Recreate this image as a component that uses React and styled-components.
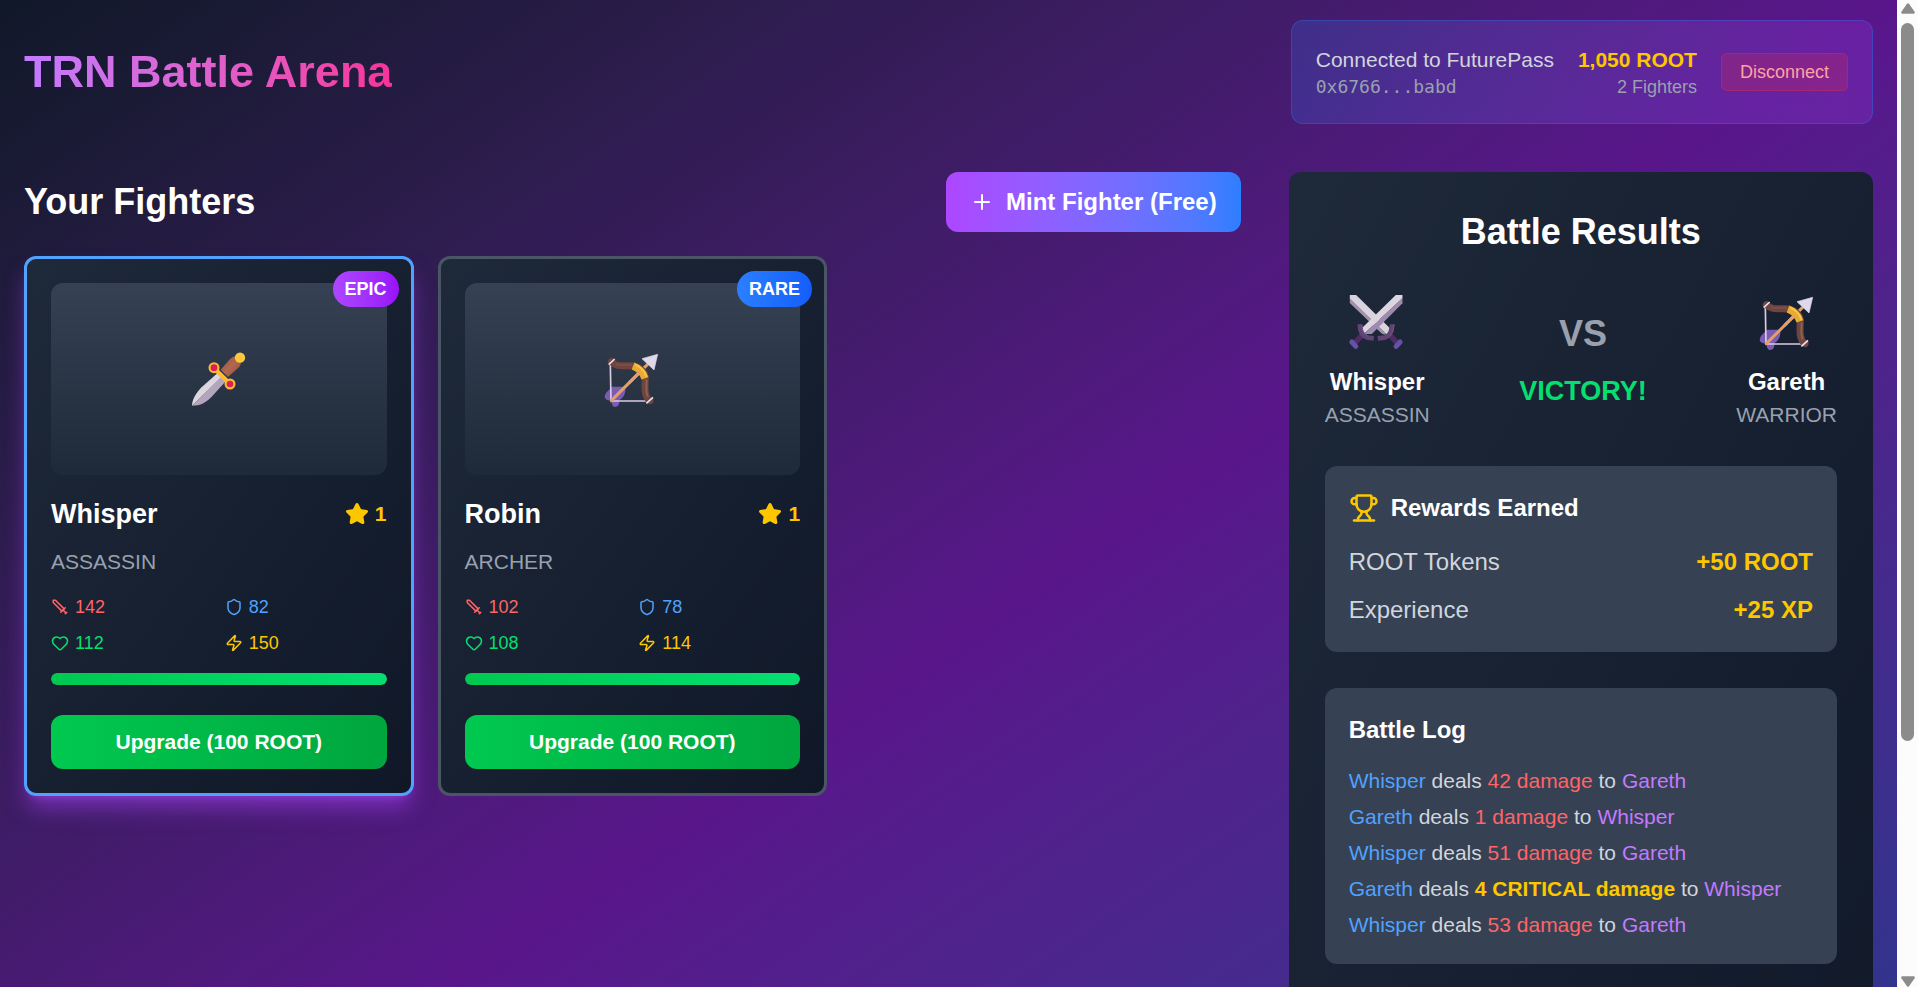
import React from "react";
import styled, { createGlobalStyle, css } from "styled-components";
import { Heart, Plus, Shield, Star, Trophy, Zap } from "lucide-react";

const colors = {
  gray300: "#d1d5dc",
  gray400: "#99a1af",
  gray600: "#4a5565",
  gray700: "#364153",
  gray800: "#1e2939",
  gray900: "#101828",
  red: "#ff6467",
  blue: "#51a2ff",
  green: "#05df72",
  yellow: "#fdc700",
  purple: "#c27aff",
};

const GlobalStyle = createGlobalStyle`
  *, *::before, *::after { box-sizing: border-box; }
  html, body { margin: 0; height: 100%; overflow: hidden; }
  body {
    font-family: "Liberation Sans", Arial, sans-serif;
    font-size: 24px;
    line-height: 36px;
    color: #fff;
  }
  h1, h2, h3, h4, p { margin: 0; }
  button { font-family: inherit; color: inherit; cursor: pointer; }
  svg { display: block; flex-shrink: 0; }
`;

const Window = styled.div`
  display: flex;
  height: 987px;
  overflow: hidden;
`;

const Page = styled.main`
  flex: 1;
  min-width: 0;
  height: 1299px;
  padding: 20px 24px 24px;
  background: linear-gradient(to bottom right in oklab, #101828, #59168b, #1c398e);
`;

const ScrollTrack = styled.div`
  width: 21px;
  height: 987px;
  padding: 3px 0 0;
  background: #fcfcfc;
  display: flex;
  flex-direction: column;
  align-items: center;
`;

const ScrollThumb = styled.div`
  width: 13px;
  height: 718px;
  margin: 9px 0 auto;
  border-radius: 7px;
  background: #8b8b8b;
`;

const Header = styled.header`
  display: flex;
  justify-content: space-between;
  align-items: center;
  margin-bottom: 48px;
`;

const Title = styled.h1`
  font-size: 45px;
  line-height: 54px;
  font-weight: 700;
  color: transparent;
  background: linear-gradient(to right in oklab, #c27aff, #f6339a);
  background-clip: text;
  -webkit-background-clip: text;
`;

const Wallet = styled.section`
  display: flex;
  align-items: center;
  gap: 24px;
  padding: 24px;
  border: 1px solid rgba(43, 127, 255, 0.3);
  border-radius: 12px;
  background: linear-gradient(to right in oklab, rgba(43, 127, 255, 0.2), rgba(173, 70, 255, 0.2));
`;

const WalletColumn = styled.div`
  text-align: ${(p) => p.$align || "left"};
`;

const WalletLabel = styled.p`
  font-size: 21px;
  line-height: 30px;
  color: ${(p) => (p.$strong ? colors.yellow : colors.gray300)};
  font-weight: ${(p) => (p.$strong ? 700 : 400)};
`;

const WalletDetail = styled.p`
  font-size: 18px;
  line-height: 24px;
  color: ${colors.gray400};
  ${(p) => p.$mono && css`font-family: "DejaVu Sans Mono", monospace;`}
`;

const DisconnectButton = styled.button`
  padding: 6px 18px;
  font-size: 18px;
  line-height: 24px;
  border: 1px solid rgba(251, 44, 54, 0.3);
  border-radius: 6px;
  background: rgba(251, 44, 54, 0.2);
  color: #ffa2a2;
`;

const Columns = styled.div`
  display: grid;
  grid-template-columns: repeat(3, minmax(0, 1fr));
  gap: 48px;
  align-items: start;
`;

const Fighters = styled.section`
  grid-column: span 2;
`;

const SectionHead = styled.div`
  display: flex;
  justify-content: space-between;
  align-items: center;
  margin-bottom: 24px;
`;

const SectionTitle = styled.h2`
  font-size: 36px;
  line-height: 48px;
  font-weight: 700;
  text-align: ${(p) => (p.$center ? "center" : "left")};
`;

const MintButton = styled.button`
  display: flex;
  align-items: center;
  gap: 12px;
  padding: 12px 24px;
  border: 0;
  border-radius: 12px;
  background: linear-gradient(to right in oklab, #ad46ff, #2b7fff);
  font-size: 24px;
  line-height: 36px;
  font-weight: 700;
`;

const FighterGrid = styled.div`
  display: grid;
  grid-template-columns: repeat(3, minmax(0, 1fr));
  gap: 24px;
`;

const Card = styled.article`
  position: relative;
  padding: 24px;
  border: 3px solid ${(p) => (p.$selected ? colors.blue : colors.gray600)};
  border-radius: 12px;
  background: linear-gradient(to bottom right in oklab, ${colors.gray800}, ${colors.gray900});
  ${(p) =>
    p.$selected &&
    css`
      box-shadow: 0 15px 22.5px -4.5px rgba(173, 70, 255, 0.5), 0 6px 9px -6px rgba(173, 70, 255, 0.5);
    `}
`;

const rarityGradients = {
  EPIC: "#ad46ff, #9810fa",
  RARE: "#2b7fff, #155dfc",
};

const RarityBadge = styled.span`
  position: absolute;
  top: 12px;
  right: 12px;
  padding: 6px 12px;
  border-radius: 18px;
  font-size: 18px;
  line-height: 24px;
  font-weight: 700;
  background: linear-gradient(to right in oklab, ${(p) => rarityGradients[p.$rarity]});
`;

const Portrait = styled.div`
  display: flex;
  align-items: center;
  justify-content: center;
  height: 192px;
  margin-bottom: 18px;
  border-radius: 12px;
  background: linear-gradient(to bottom in oklab, ${colors.gray700}, ${colors.gray800});
`;

const NameRow = styled.div`
  display: flex;
  justify-content: space-between;
  align-items: center;
  margin-bottom: 12px;
`;

const FighterName = styled.h3`
  font-size: 27px;
  line-height: 42px;
  font-weight: 700;
`;

const Level = styled.div`
  display: flex;
  align-items: center;
  gap: 6px;
  font-size: 21px;
  line-height: 30px;
  font-weight: 700;
  color: ${colors.yellow};
`;

const ClassName = styled.p`
  font-size: 21px;
  line-height: 30px;
  color: ${colors.gray400};
`;

const Stats = styled.div`
  display: grid;
  grid-template-columns: 1fr 1fr;
  gap: 12px;
  margin: 18px 0;
`;

const Stat = styled.div`
  display: flex;
  align-items: center;
  gap: 6px;
  font-size: 18px;
  line-height: 24px;
  color: ${(p) => colors[p.$tone]};
`;

const HealthTrack = styled.div`
  height: 12px;
  margin-bottom: 30px;
  border-radius: 6px;
  overflow: hidden;
  background: ${colors.gray700};
`;

const HealthFill = styled.div`
  height: 100%;
  border-radius: 6px;
  background: linear-gradient(to right in oklab, #00c950, #05df72);
`;

const UpgradeButton = styled.button`
  display: block;
  width: 100%;
  padding: 12px;
  border: 0;
  border-radius: 12px;
  background: linear-gradient(to right in oklab, #00c950, #00a63e);
  font-size: 21px;
  line-height: 30px;
  font-weight: 700;
`;

const Results = styled.section`
  height: 1099px;
  padding: 36px;
  border-radius: 12px;
  background: linear-gradient(to bottom right in oklab, ${colors.gray800}, ${colors.gray900});
`;

const Versus = styled.div`
  display: flex;
  justify-content: space-between;
  align-items: center;
  margin: 36px 0;
`;

const Side = styled.div`
  display: flex;
  flex-direction: column;
  align-items: center;
`;

const SideName = styled.h3`
  margin-top: 12px;
  font-size: 24px;
  line-height: 36px;
  font-weight: 700;
`;

const VersusLabel = styled.p`
  font-size: 36px;
  line-height: 48px;
  font-weight: 700;
  color: ${colors.gray400};
`;

const Outcome = styled.p`
  margin-top: 12px;
  font-size: 27px;
  line-height: 42px;
  font-weight: 700;
  color: ${colors.green};
`;

const Box = styled.div`
  padding: 24px;
  margin-bottom: 36px;
  border-radius: 12px;
  background: ${colors.gray700};
`;

const BoxTitle = styled.h4`
  display: flex;
  align-items: center;
  gap: 12px;
  margin-bottom: 18px;
  font-size: 24px;
  line-height: 36px;
  font-weight: 700;

  svg { color: ${colors.yellow}; }
`;

const Reward = styled.div`
  display: flex;
  justify-content: space-between;
  color: ${colors.gray300};

  & + & { margin-top: 12px; }
  strong { color: ${colors.yellow}; }
`;

const LogLine = styled.p`
  font-size: 21px;
  line-height: 30px;
  color: ${colors.gray300};

  & + & { margin-top: 6px; }
`;

const Tinted = styled.span`
  color: ${(p) => colors[p.$tone]};
  font-weight: ${(p) => (p.$bold ? 700 : 400)};
`;

const SwordIcon = ({ size }) => (
  <svg width={size} height={size} viewBox="0 0 24 24" fill="none" stroke="currentColor" strokeWidth="2" strokeLinecap="round" strokeLinejoin="round">
    <path d="M14.5 17.5L3 6V3h3l11.5 11.5" />
    <path d="M13 19l6-6" />
    <path d="M16 16l4 4" />
    <path d="M19 21l2-2" />
  </svg>
);

const DaggerArt = () => (
  <svg width="60" height="60" viewBox="0 0 180 180">
    <defs>
      <linearGradient id="hilt" x1="0" y1="0" x2="1" y2="1">
        <stop offset="0" stopColor="#8a4f42" />
        <stop offset=".5" stopColor="#b0694e" />
        <stop offset="1" stopColor="#8b4a40" />
      </linearGradient>
    </defs>
    <path d="M9 170C9 152 20 134 36 116L86 72L98 84Z" fill="#dcd6de" />
    <path d="M9 170C34 170 52 160 68 143L109 98L96 84Z" fill="#b3a5bd" />
    <path d="M95 62L123 30Q133 19 142 24L155 38Q158 46 151 54L117 84Z" fill="url(#hilt)" />
    <circle cx="153" cy="26" r="15.5" fill="#fdc93c" />
    <path d="M77 59L121 103" stroke="#ffbd36" strokeWidth="13" />
    <circle cx="75" cy="56" r="16.5" fill="#fcb937" />
    <circle cx="123" cy="105" r="16.5" fill="#fcb937" />
    <circle cx="75" cy="56" r="10" fill="#dc214f" />
    <circle cx="123" cy="105" r="10" fill="#dc214f" />
  </svg>
);

const BowArt = () => (
  <svg width="60" height="60" viewBox="0 0 180 180" fill="none">
    <path d="M30 113H70V126Q68 144 52 154Q54 174 38 174Q29 173 28 154Q8 156 8 142Q9 132 20 124Z" fill="#7a5db0" />
    <path d="M25 45L27 156H135" stroke="#dccbe5" strokeWidth="5" />
    <path d="M28 155L136 47" stroke="#e59d6c" strokeWidth="9" strokeLinecap="round" />
    <path d="M28 38C46 57 66 48 94 51Q128 60 130 88C129 112 125 142 144 155" stroke="#70453f" strokeWidth="21" strokeLinecap="round" />
    <path d="M134 92C133 110 131 128 137 143" stroke="#8a6153" strokeWidth="6" />
    <path d="M42 46C56 51 74 46 90 47" stroke="#805245" strokeWidth="5" />
    <path d="M93 51Q120 61 129 88" stroke="#e9aa32" strokeWidth="22" />
    <path d="M100 47Q127 59 133 83" stroke="#f6c64a" strokeWidth="6" />
    <path d="M82 101L112 71" stroke="#e59d6c" strokeWidth="9" />
    <path d="M20 47L38 30M133 163L153 145" stroke="#e9e1ef" strokeWidth="5" />
    <path d="M120 29L167 16L156 63Z" fill="#dfd8eb" stroke="#dfd8eb" strokeWidth="2" strokeLinejoin="round" />
  </svg>
);

const SwordsArt = () => (
  <svg width="60" height="60" viewBox="21.6 21 180 180" fill="none">
    <path d="M150 150L174 176" stroke="#4f2c66" strokeWidth="16" />
    <path d="M67 150L43 176" stroke="#4f2c66" strokeWidth="16" />
    <path d="M169 184L181 171M48 184L36 171" stroke="#6552a8" strokeWidth="15" strokeLinecap="round" />
    <path d="M30 30H49L149 128Q150 140 140 148L30 42Z" fill="#d9d3dd" />
    <path d="M30 40L140 148Q132 150 124 144L30 54Z" fill="#a192ae" />
    <path d="M188 30H168L69 127Q66 135 72 147L188 40Z" fill="#dcd6e0" />
    <path d="M188 38V55L96 147H73Z" fill="#a08bb0" />
    <path d="M60 118Q60 151 84 158L102 160M157 118Q157 151 134 158L114 160" stroke="#604473" strokeWidth="14" />
    <path d="M66 118Q66 145 84 153M163 118Q162 142 150 154" stroke="#775488" strokeWidth="3" />
  </svg>
);

const fighterArt = { dagger: DaggerArt, bow: BowArt, swords: SwordsArt };

const fighters = [
  { name: "Whisper", role: "ASSASSIN", rarity: "EPIC", art: "dagger", stats: [142, 82, 112, 150], health: 100, selected: true },
  { name: "Robin", role: "ARCHER", rarity: "RARE", art: "bow", stats: [102, 78, 108, 114], health: 100 },
];

const statKinds = [
  { Icon: SwordIcon, tone: "red" },
  { Icon: Shield, tone: "blue" },
  { Icon: Heart, tone: "green" },
  { Icon: Zap, tone: "yellow" },
];

const log = [
  { from: "Whisper", damage: 42, to: "Gareth" },
  { from: "Gareth", damage: 1, to: "Whisper" },
  { from: "Whisper", damage: 51, to: "Gareth" },
  { from: "Gareth", damage: 4, to: "Whisper", critical: true },
  { from: "Whisper", damage: 53, to: "Gareth" },
];

function FighterCard({ fighter }) {
  const Art = fighterArt[fighter.art];
  return (
    <Card $selected={fighter.selected}>
      <Portrait><Art /></Portrait>
      <RarityBadge $rarity={fighter.rarity}>{fighter.rarity}</RarityBadge>
      <NameRow>
        <FighterName>{fighter.name}</FighterName>
        <Level>
          <Star size={24} fill="currentColor" />
          <span>1</span>
        </Level>
      </NameRow>
      <ClassName>{fighter.role}</ClassName>
      <Stats>
        {statKinds.map(({ Icon, tone }, i) => (
          <Stat key={tone} $tone={tone}>
            <Icon size={18} />
            <span>{fighter.stats[i]}</span>
          </Stat>
        ))}
      </Stats>
      <HealthTrack>
        <HealthFill style={{ width: `${fighter.health}%` }} />
      </HealthTrack>
      <UpgradeButton>Upgrade (100 ROOT)</UpgradeButton>
    </Card>
  );
}

function Combatant({ name, role, art }) {
  const Art = fighterArt[art];
  return (
    <Side>
      <Art />
      <SideName>{name}</SideName>
      <ClassName>{role}</ClassName>
    </Side>
  );
}

export default function App() {
  return (
    <>
      <GlobalStyle />
      <Window>
        <Page>
          <Header>
            <Title>TRN Battle Arena</Title>
            <Wallet>
              <WalletColumn>
                <WalletLabel>Connected to FuturePass</WalletLabel>
                <WalletDetail $mono>0x6766...babd</WalletDetail>
              </WalletColumn>
              <WalletColumn $align="right">
                <WalletLabel $strong>1,050 ROOT</WalletLabel>
                <WalletDetail>2 Fighters</WalletDetail>
              </WalletColumn>
              <DisconnectButton>Disconnect</DisconnectButton>
            </Wallet>
          </Header>
          <Columns>
            <Fighters>
              <SectionHead>
                <SectionTitle>Your Fighters</SectionTitle>
                <MintButton>
                  <Plus size={24} />
                  Mint Fighter (Free)
                </MintButton>
              </SectionHead>
              <FighterGrid>
                {fighters.map((f) => (
                  <FighterCard key={f.name} fighter={f} />
                ))}
              </FighterGrid>
            </Fighters>
            <Results>
              <SectionTitle $center>Battle Results</SectionTitle>
              <Versus>
                <Combatant name="Whisper" role="ASSASSIN" art="swords" />
                <Side>
                  <VersusLabel>VS</VersusLabel>
                  <Outcome>VICTORY!</Outcome>
                </Side>
                <Combatant name="Gareth" role="WARRIOR" art="bow" />
              </Versus>
              <Box>
                <BoxTitle>
                  <Trophy size={30} />
                  Rewards Earned
                </BoxTitle>
                <Reward><span>ROOT Tokens</span><strong>+50 ROOT</strong></Reward>
                <Reward><span>Experience</span><strong>+25 XP</strong></Reward>
              </Box>
              <Box>
                <BoxTitle>Battle Log</BoxTitle>
                {log.map((entry, i) => (
                  <LogLine key={i}>
                    <Tinted $tone="blue">{entry.from}</Tinted> deals{" "}
                    <Tinted $tone={entry.critical ? "yellow" : "red"} $bold={entry.critical}>
                      {entry.damage}{entry.critical ? " CRITICAL" : ""} damage
                    </Tinted>{" "}
                    to <Tinted $tone="purple">{entry.to}</Tinted>
                  </LogLine>
                ))}
              </Box>
            </Results>
          </Columns>
        </Page>
        <ScrollTrack>
          <svg width="14" height="11" viewBox="0 0 14 11" fill="#8b8b8b">
            <path d="M6 .8Q7 -.4 8 .8L13.6 8.8Q14.2 10.6 12.6 10.8H1.4Q-.2 10.6 .4 8.8Z" />
          </svg>
          <ScrollThumb />
          <svg width="14" height="11" viewBox="0 0 14 11" fill="#8b8b8b">
            <path d="M6 10.2Q7 11.4 8 10.2L13.6 2.2Q14.2 .4 12.6 .2H1.4Q-.2 .4 .4 2.2Z" />
          </svg>
        </ScrollTrack>
      </Window>
    </>
  );
}
